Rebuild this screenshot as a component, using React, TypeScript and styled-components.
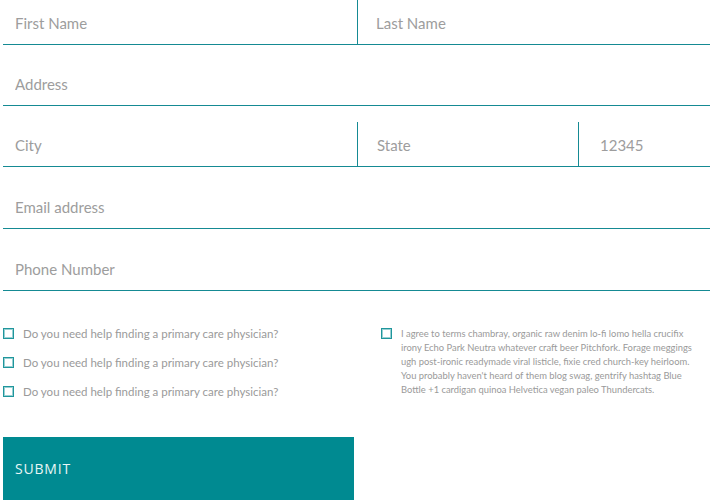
import React from "react";
import styled, { createGlobalStyle } from "styled-components";

const GlobalStyle = createGlobalStyle`
    html, body {
        margin: 0;
        padding: 0;
        background: #ffffff;
        overflow: hidden;
    }
    body {
        font-family: Lato, "Open Sans", sans-serif;
    }
`;

const teal = "#158a93";

const Form = styled.form`
    width: 707px;
    padding: 0 0 0 3px;
    display: flex;
    flex-direction: column;
`;

const Row = styled.div<{ $gap?: number }>`
    display: flex;
    margin-top: ${(p) => p.$gap ?? 16}px;
    border-bottom: 1px solid ${teal};
`;

const Field = styled.input<{ $width?: number; $pad?: number; $divider?: boolean }>`
    flex: ${(p) => (p.$width ? `0 0 ${p.$width}px` : "1 1 auto")};
    min-width: 0;
    height: 44px;
    box-sizing: border-box;
    border: none;
    border-right: ${(p) => (p.$divider ? `1px solid ${teal}` : "none")};
    outline: none;
    padding: 1px 0 0 ${(p) => p.$pad ?? 12}px;
    font-family: Lato, "Open Sans", sans-serif;
    font-size: 15px;
    color: #555;
    background: transparent;

    &::placeholder {
        color: #9d9d9d;
    }
`;

const Options = styled.div`
    display: flex;
    margin-top: 36px;
`;

const Column = styled.div<{ $width?: number }>`
    flex: ${(p) => (p.$width ? `0 0 ${p.$width}px` : "1 1 auto")};
    display: flex;
    flex-direction: column;
    gap: 15px;
`;

const Check = styled.label`
    display: flex;
    align-items: flex-start;
    gap: 9px;
    font-size: 11.5px;
    line-height: 14px;
    color: #9a9a9a;
`;

const Box = styled.span`
    flex: 0 0 auto;
    box-sizing: border-box;
    width: 11px;
    height: 11px;
    margin-top: 1px;
    border: 1px solid #1f969c;
    box-shadow: inset 0 0 0 1px rgba(70, 170, 175, 0.55);
`;

const Terms = styled.p`
    margin: 0;
    width: 300px;
    font-size: 9.4px;
    line-height: 14px;
    color: #9a9a9a;
`;

const Submit = styled.button`
    margin-top: 38px;
    width: 351px;
    height: 70px;
    border: none;
    background: #008a91;
    color: #e8f6f6;
    text-align: left;
    padding: 0 0 8px 12px;
    font-family: "Open Sans", sans-serif;
    font-size: 14px;
    letter-spacing: 0.8px;
    cursor: pointer;
`;

function App() {
    return (
        <>
            <GlobalStyle />
            <Form onSubmit={(e) => e.preventDefault()}>
                <Row $gap={0}>
                    <Field $width={355} $divider placeholder="First Name" />
                    <Field $pad={18} placeholder="Last Name" />
                </Row>
                <Row>
                    <Field placeholder="Address" />
                </Row>
                <Row>
                    <Field $width={355} $divider placeholder="City" />
                    <Field $width={221} $divider $pad={19} placeholder="State" />
                    <Field $pad={21} placeholder="12345" />
                </Row>
                <Row $gap={17}>
                    <Field placeholder="Email address" />
                </Row>
                <Row $gap={17}>
                    <Field placeholder="Phone Number" />
                </Row>
                <Options>
                    <Column $width={378}>
                        <Check><Box />Do you need help finding a primary care physician?</Check>
                        <Check><Box />Do you need help finding a primary care physician?</Check>
                        <Check><Box />Do you need help finding a primary care physician?</Check>
                    </Column>
                    <Column>
                        <Check>
                            <Box />
                            <Terms>
                                I agree to terms chambray, organic raw denim lo-fi lomo hella crucifix irony Echo Park
                                Neutra whatever craft beer Pitchfork. Forage meggings ugh post-ironic readymade viral
                                listicle, fixie cred church-key heirloom. You probably haven't heard of them blog swag,
                                gentrify hashtag Blue Bottle +1 cardigan quinoa Helvetica vegan paleo Thundercats.
                            </Terms>
                        </Check>
                    </Column>
                </Options>
                <Submit type="submit">SUBMIT</Submit>
            </Form>
        </>
    );
}

export default App;
